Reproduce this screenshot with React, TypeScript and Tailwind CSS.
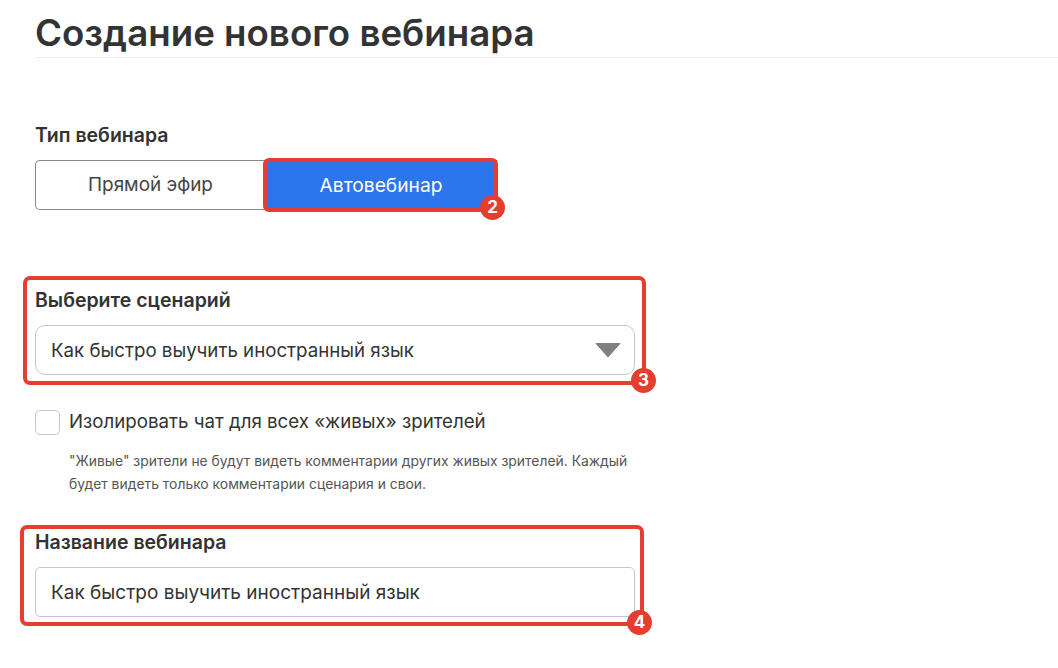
import React from 'react';

const Marker = ({ n, className }: { n: number; className: string }) => (
  <span
    className={`absolute w-[25px] h-[25px] rounded-full bg-[#e53e30] text-white text-[17px] font-bold leading-[25px] text-center ${className}`}
  >
    {n}
  </span>
);

export default function App() {
  return (
    <div className="w-[1058px] h-[668px] overflow-hidden bg-white pl-[35px] text-[#333333] font-['Inter','Noto_Sans',sans-serif]">
      <div className="h-[58px] border-b border-[#ececec]">
        <h1 className="text-[36.7px] leading-[66px] font-semibold">Создание нового вебинара</h1>
      </div>

      <div className="mt-[65px] text-[19.5px] leading-[24px] font-semibold">Тип вебинара</div>

      <div className="flex mt-[13px] w-[462px] h-[50px]">
        <button className="w-[230px] h-full border border-[#8a8a8a] border-r-0 rounded-l-[5px] text-[18.9px] text-[#444444]">
          Прямой эфир
        </button>
        <div className="relative w-[232px] h-full">
          <button className="w-full h-full bg-[#2b76ec] text-white text-[19.2px]">Автовебинар</button>
          <div className="absolute -left-[2px] -top-[2px] w-[235px] h-[54px] border-[4px] border-[#e53e30] rounded-[6px]" />
          <Marker n={2} className="left-[215px] top-[35px]" />
        </div>
      </div>

      <div className="relative mt-[78px] w-[600px]">
        <div className="text-[19.5px] leading-[24px] font-semibold">Выберите сценарий</div>
        <div className="flex items-center justify-between mt-[13px] h-[50px] border border-[#c8c8c8] rounded-[10px] pl-[15px] pr-[13px] text-[18.7px]">
          <span className="pt-[2px]">Как быстро выучить иностранный язык</span>
          <svg width="26" height="16" viewBox="0 0 26 16">
            <path d="M1 1.5h24L13 15z" fill="#808080" stroke="#808080" strokeLinejoin="round" />
          </svg>
        </div>
        <div className="absolute -left-[12px] -top-[12px] w-[623px] h-[109px] border-[4px] border-[#e53e30] rounded-[7px]" />
        <Marker n={3} className="left-[596px] top-[80px]" />
      </div>

      <label className="flex items-center gap-[9px] mt-[34px]">
        <span className="w-[25px] h-[25px] border border-[#c8c8c8] rounded-[5px]" />
        <span className="text-[18.7px] leading-[26px]">Изолировать чат для всех «живых» зрителей</span>
      </label>
      <p className="mt-[15px] ml-[34px] w-[565px] text-[13.9px] leading-[23px] text-[#555555]">
        "Живые" зрители не будут видеть комментарии других живых зрителей. Каждый будет видеть только комментарии сценария и свои.
      </p>

      <div className="relative mt-[34px] w-[600px]">
        <div className="text-[19.5px] leading-[24px] font-semibold">Название вебинара</div>
        <div className="flex items-center mt-[13px] h-[50px] border border-[#c8c8c8] rounded-[5px] pl-[15px] text-[19px]">
          <span className="pt-[2px]">Как быстро выучить иностранный язык</span>
        </div>
        <div className="absolute -left-[15px] -top-[5px] w-[624px] h-[101px] border-[4px] border-[#e53e30] rounded-[7px]" />
        <Marker n={4} className="left-[592px] top-[80px]" />
      </div>
    </div>
  );
}
